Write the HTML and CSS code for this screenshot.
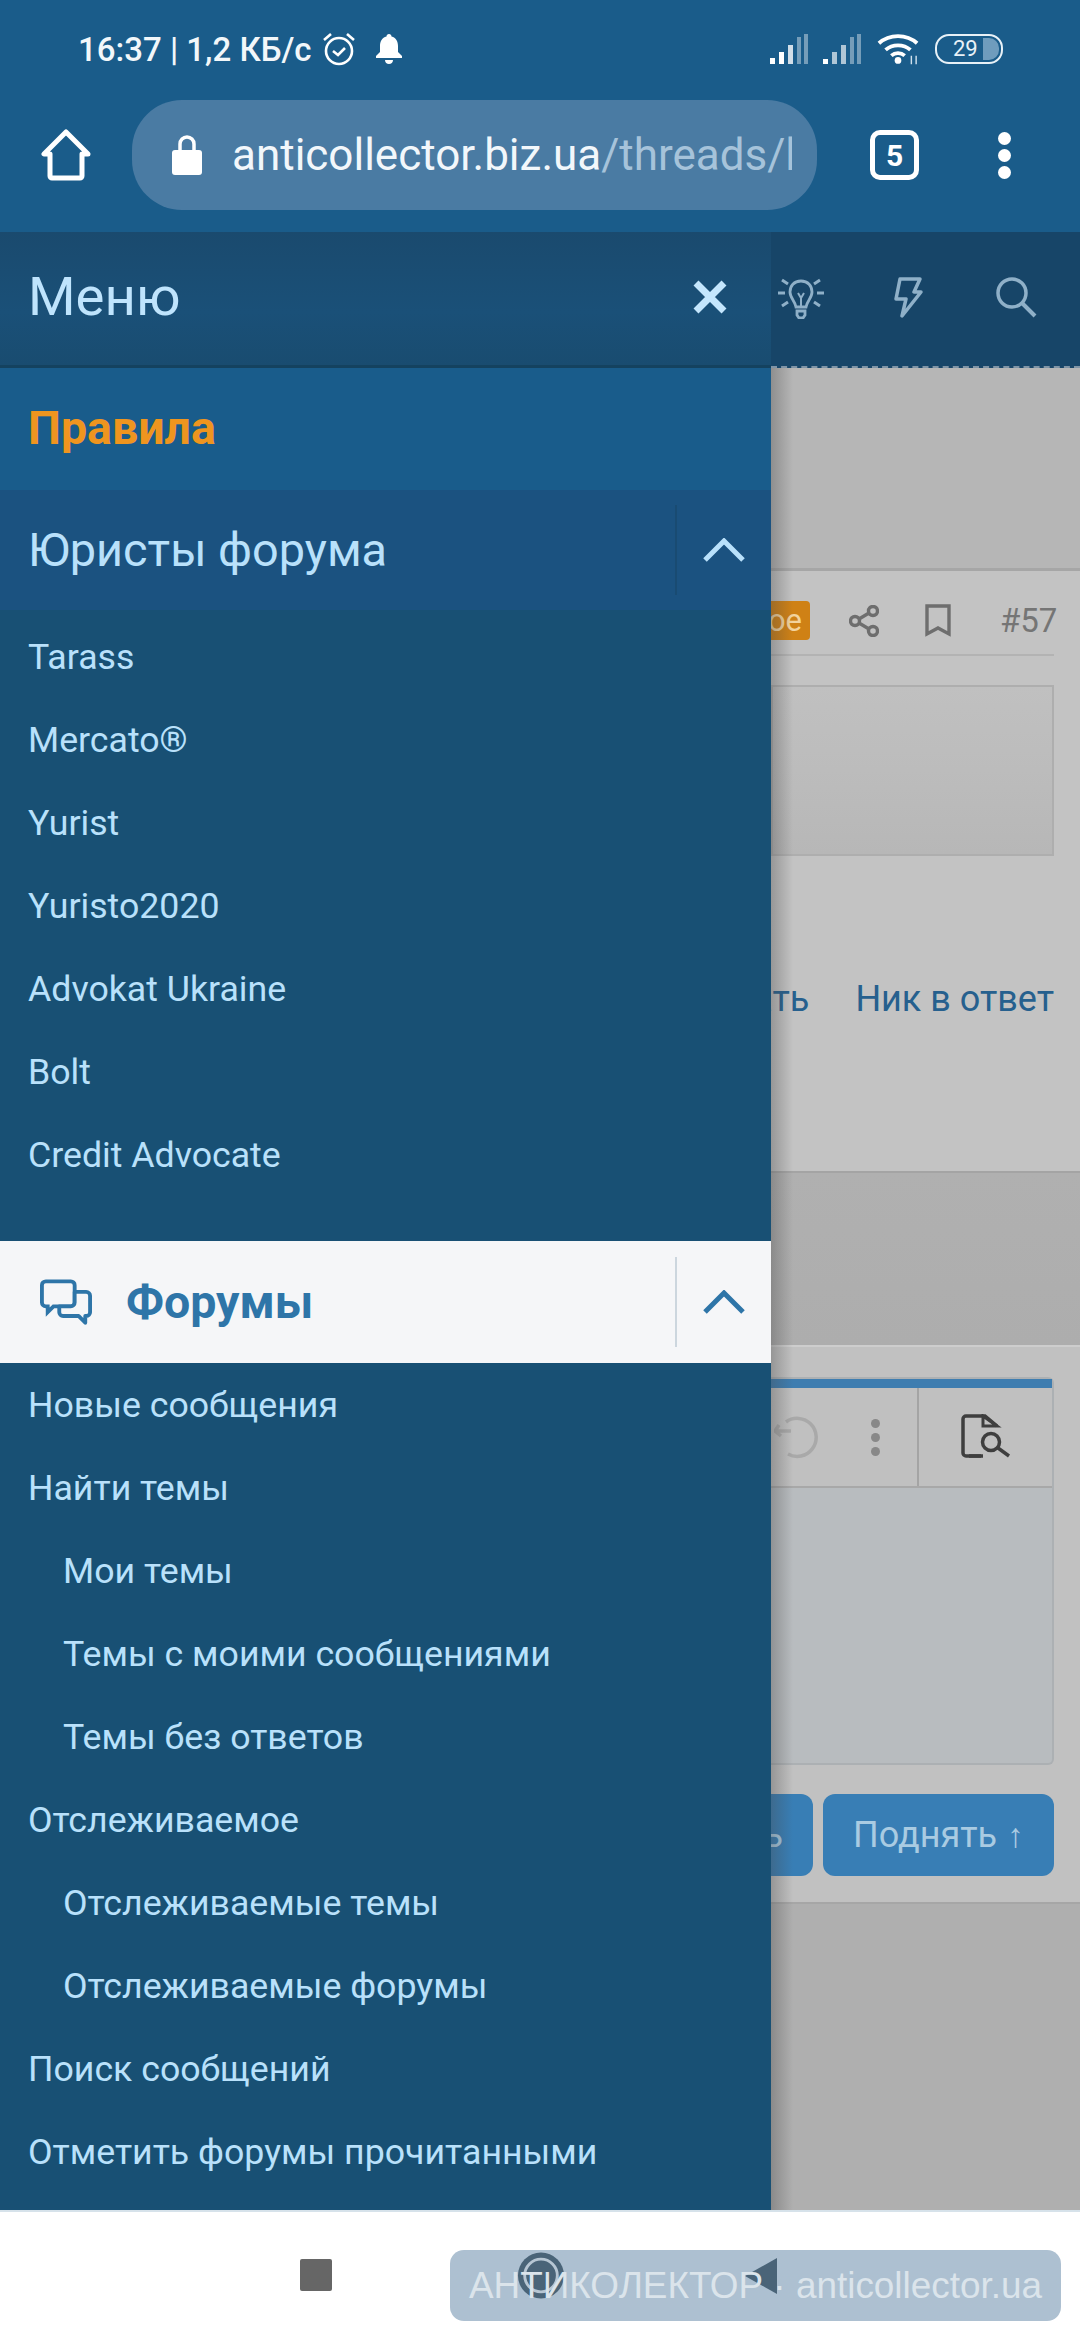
FILE: index.html
```html
<!DOCTYPE html>
<html lang="ru">
<head>
<meta charset="utf-8">
<title>Меню</title>
<link rel="stylesheet" href="styles.css">
</head>
<body>
<div class="phone">
  <div class="chrome">
    <div class="status">
      <div class="status-left">
        <span class="clock">16:37 | 1,2 КБ/с</span>
        <svg class="ic-alarm" viewBox="0 0 36 36"><circle cx="18" cy="20" r="13" fill="none" stroke="#fff" stroke-width="2.6"/><path d="M12 20l5 4 7-7M3 9l7-6M33 9l-7-6" fill="none" stroke="#fff" stroke-width="2.6"/></svg>
        <svg class="ic-bell" viewBox="0 0 30 32"><path d="M15 1c1.500 0 2.500 1 2.500 2.500 4.500 1.200 6.500 5 6.500 9.500v6l4 4v2H2v-2l4-4v-6c0-4.500 2-8.300 6.500-9.500C12.500 2 13.500 1 15 1zM11 27h8c0 2.500-1.700 4-4 4s-4-1.500-4-4z" fill="#fff"/></svg>
      </div>
      <div class="status-right">
        <svg class="ic-signal" viewBox="0 0 40 30"><path d="M1 30v-6h5v6zM10 30V18h5v12z" fill="#fff"/><path d="M19 30V11h5v19z" fill="#fff" opacity=".8"/><path d="M28 30V3h4v27zM35 30V0h4v30z" fill="#fff" opacity=".4"/></svg>
        <svg class="ic-signal" viewBox="0 0 40 30"><path d="M1 30v-5h5v5z" fill="#fff"/><path d="M10 30V18h5v12zM19 30V11h5v19z" fill="#fff" opacity=".65"/><path d="M28 30V3h4v27zM35 30V0h4v30z" fill="#fff" opacity=".4"/></svg>
        <svg class="ic-wifi" viewBox="0 0 44 34"><path d="M2 11c11-10 29-10 40 0M9 18c7-6.500 19-6.500 26 0M15 24c4-3.500 10-3.500 14 0" fill="none" stroke="#fff" stroke-width="4"/><circle cx="22" cy="29" r="3.500" fill="#fff"/><path d="M36 24v9M41 24v9" stroke="#cfe0ec" stroke-width="1.500"/></svg>
        <div class="battery"><span class="battery-num">29</span><span class="battery-fill"></span></div>
      </div>
    </div>
    <div class="urlbar">
      <svg class="ic-home" viewBox="0 0 52 52"><path d="M26 3L4 25h6v22a2 2 0 0 0 2 2h28a2 2 0 0 0 2-2V25h6z" fill="none" stroke="#fff" stroke-width="5" stroke-linejoin="round"/></svg>
      <div class="pill">
        <svg class="ic-lock" viewBox="0 0 30 40"><path d="M8 16V9a7 7 0 0 1 14 0v7" fill="none" stroke="#fff" stroke-width="3.500"/><rect x="0" y="15" width="30" height="25" rx="3" fill="#fff"/></svg>
        <div class="url"><span class="url-host">anticollector.biz.ua</span><span class="url-path">/threads/k</span></div>
      </div>
      <div class="tabs">5</div>
      <div class="more"><i></i><i></i><i></i></div>
    </div>
  </div>

  <div class="main">
    <nav class="drawer">
      <div class="drawer-head">
        <span class="drawer-title">Меню</span>
        <svg class="ic-close" viewBox="0 0 36 36"><path d="M4 4l28 28M32 4L4 32" stroke="#c4e6fd" stroke-width="7"/></svg>
      </div>
      <div class="rules"><span>Правила</span></div>
      <div class="section">
        <span class="section-title">Юристы форума</span>
        <div class="toggle"><svg class="ic-chev" viewBox="0 0 42 24"><path d="M2 22L21 3l19 19" fill="none" stroke="#b9e1fb" stroke-width="5"/></svg></div>
      </div>
      <ul class="list list-first">
        <li>Tarass</li>
        <li>Mercato®</li>
        <li>Yurist</li>
        <li>Yuristo2020</li>
        <li>Advokat Ukraine</li>
        <li>Bolt</li>
        <li>Credit Advocate</li>
      </ul>
      <div class="section section-active">
        <svg class="ic-chat" viewBox="0 0 54 48"><path d="M6 2h26a4 4 0 0 1 4 4v18a4 4 0 0 1-4 4H14l-6 6v-6H6a4 4 0 0 1-4-4V6a4 4 0 0 1 4-4z" fill="#f5f6f8" stroke="#2e75a8" stroke-width="4"/><path d="M36 13h12a4 4 0 0 1 4 4v17a4 4 0 0 1-4 4h-1v7l-7-7H24a4 4 0 0 1-4-4v-6h12a4 4 0 0 0 4-4z" fill="#f5f6f8" stroke="#2e75a8" stroke-width="4" stroke-linejoin="round"/></svg>
        <span class="section-title">Форумы</span>
        <div class="toggle"><svg class="ic-chev" viewBox="0 0 42 24"><path d="M2 22L21 3l19 19" fill="none" stroke="#2e75a8" stroke-width="5"/></svg></div>
      </div>
      <ul class="list list-last">
        <li>Новые сообщения</li>
        <li>Найти темы</li>
        <li class="sub">Мои темы</li>
        <li class="sub">Темы с моими сообщениями</li>
        <li class="sub">Темы без ответов</li>
        <li>Отслеживаемое</li>
        <li class="sub">Отслеживаемые темы</li>
        <li class="sub">Отслеживаемые форумы</li>
        <li>Поиск сообщений</li>
        <li>Отметить форумы прочитанными</li>
      </ul>
    </nav>

    <div class="page">
      <div class="page-head">
        <svg class="ic-bulb" viewBox="0 0 50 44"><path d="M25 6c-7 0-11 5-11 11 0 6 5 9 6 15h10c1-6 6-9 6-15 0-6-4-11-11-11zM21 36h8v4l-2 3h-4l-2-3z" fill="none" stroke="#8fb0c8" stroke-width="2.800"/><path d="M2 18h7M41 18h7M6 5l6 4M44 5l-6 4M6 31l6-4M44 31l-6-4" stroke="#8fb0c8" stroke-width="3"/><path d="M22 18l3 5 3-5M25 23v9" fill="none" stroke="#8fb0c8" stroke-width="2"/></svg>
        <svg class="ic-bolt" viewBox="0 0 32 42"><path d="M8 3h20l-6 13h7L10 40l4-17H4z" fill="none" stroke="#8fb0c8" stroke-width="3.500" stroke-linejoin="round"/></svg>
        <svg class="ic-search" viewBox="0 0 42 42"><circle cx="17" cy="17" r="14" fill="none" stroke="#8fb0c8" stroke-width="3.500"/><path d="M27 27l13 13" stroke="#8fb0c8" stroke-width="4"/></svg>
      </div>
      <div class="page-title"></div>
      <div class="post">
        <div class="post-meta">
          <span class="badge">Новое</span>
          <svg class="ic-share" viewBox="0 0 30 32"><g fill="none" stroke="#6e6e6e" stroke-width="3.400"><circle cx="6" cy="16" r="4.500"/><circle cx="24" cy="6" r="4.500"/><circle cx="24" cy="26" r="4.500"/><path d="M10 14l10-6M10 18l10 6"/></g></svg>
          <svg class="ic-mark" viewBox="0 0 26 33"><path d="M2 2h22v28l-11-6-11 6z" fill="none" stroke="#6e6e6e" stroke-width="3.400"/></svg>
          <span class="post-num">#57</span>
        </div>
        <div class="quote"></div>
        <div class="post-links">
          <span class="post-link">Цитировать</span>
          <span class="post-link">Ник в ответ</span>
        </div>
      </div>
      <div class="gap-band"></div>
      <div class="reply">
        <div class="editor">
          <div class="editor-top"></div>
          <div class="toolbar">
            <div class="tools">
              <svg class="ic-undo" viewBox="0 0 44 44"><path d="M12 7A19 19 0 1 1 14 39M1 16h16M5 10l-4 6 6 5" fill="none" stroke="#a9a9a9" stroke-width="3.500"/></svg>
              <div class="tool-dots"><i></i><i></i><i></i></div>
            </div>
            <div class="tool-preview">
              <svg class="ic-preview" viewBox="0 0 50 46"><path d="M20 42H5a3 3 0 0 1-3-3V5a3 3 0 0 1 3-3h19l12 10" fill="none" stroke="#3e3e3e" stroke-width="3.500"/><path d="M22 2v10h14z" fill="none" stroke="#3e3e3e" stroke-width="3"/><path d="M8 42h14" stroke="#3e3e3e" stroke-width="3.500"/><circle cx="30" cy="28" r="8.500" fill="none" stroke="#3e3e3e" stroke-width="3.500"/><path d="M37 34l11 8" stroke="#3e3e3e" stroke-width="3.500"/></svg>
            </div>
          </div>
          <div class="editor-body"></div>
        </div>
        <div class="buttons">
          <span class="btn btn-cut">Ответить</span>
          <span class="btn btn-main">Поднять <b class="btn-arrow">↑</b></span>
        </div>
      </div>
      <div class="page-foot"></div>
    </div>
  </div>

  <div class="navbar">
    <span class="nav-square"></span>
    <div class="watermark">
      <svg class="nav-circle" viewBox="0 0 50 50"><circle cx="25" cy="25" r="24" fill="#4a6478"/><circle cx="25" cy="25" r="17" fill="none" stroke="#b7c6d3" stroke-width="3"/></svg>
      <svg class="nav-back" viewBox="0 0 32 36"><path d="M32 0v36L0 18z" fill="#4a6478"/></svg>
      <span class="watermark-text">АНТИКОЛЕКТОР · anticollector.ua</span>
    </div>
  </div>
</div>
</body>
</html>
```

FILE: styles.css
```css
* { box-sizing: border-box; }
html, body { margin: 0; padding: 0; }
body { width: 1080px; height: 2340px; overflow: hidden; font-family: Roboto, "Liberation Sans", sans-serif; }
.phone { width: 1080px; height: 2340px; display: flex; flex-direction: column; background: #fff; }

/* browser chrome */
.chrome { height: 232px; background: #1a5c8a; display: flex; flex-direction: column; flex: none; }
.status { height: 100px; display: flex; justify-content: space-between; align-items: flex-start; padding: 29px 77px 0 78px; }
.status-left, .status-right { display: flex; align-items: center; height: 40px; }
.clock { color: #f2f7fa; font-size: 33px; font-weight: 500; white-space: nowrap; }
.ic-alarm { width: 36px; height: 36px; margin-left: 9px; }
.ic-bell { width: 30px; height: 32px; margin-left: 17px; }
.ic-signal { width: 40px; height: 30px; margin-right: 13px; }
.ic-wifi { width: 42px; height: 34px; margin-left: 2px; }
.battery { width: 68px; height: 30px; margin-left: 16px; border: 2.500px solid #e8f1f7; border-radius: 14px; display: flex; align-items: center; position: relative; padding-left: 16px; }
.battery-num { color: #e8f1f7; font-size: 22px; line-height: 1; }
.battery-fill { position: absolute; right: 2px; top: 2px; bottom: 2px; width: 16px; border-radius: 0 10px 10px 0; background: #6f9cbd; }

.urlbar { height: 110px; display: flex; align-items: center; }
.ic-home { width: 52px; height: 52px; margin-left: 40px; flex: none; }
.pill { width: 685px; height: 110px; margin-left: 40px; border-radius: 50px; background: #4a7ba3; display: flex; align-items: center; padding: 0 25px 0 40px; flex: none; }
.ic-lock { width: 30px; height: 40px; flex: none; }
.url { margin-left: 30px; font-size: 44px; white-space: nowrap; overflow: hidden; width: 560px; }
.url-host { color: #f2f7fb; }
.url-path { color: #a6c3da; }
.tabs { width: 49px; height: 50px; margin-left: 53px; border: 5px solid #fff; border-radius: 10px; color: #fff; font-size: 30px; font-weight: 700; display: flex; align-items: center; justify-content: center; flex: none; }
.more { display: flex; flex-direction: column; gap: 4px; margin-left: 79px; }
.more i { display: block; width: 13px; height: 13px; border-radius: 50%; background: #fff; }

/* main split */
.main { height: 1978px; display: flex; flex: none; }

.drawer { width: 771px; flex: none; background: #185074; display: flex; flex-direction: column; color: #b9e1fb; }
.drawer-head { height: 136px; display: flex; align-items: center; justify-content: space-between; padding: 0 43px 5px 28px; background: linear-gradient(#1a4a6e, #1a5078 60%, #194c70); border-bottom: 3px solid #14425f; }
.drawer-title { font-size: 54.500px; color: #bfe4fd; }
.ic-close { width: 36px; height: 36px; margin-top: 2px; }
.rules { height: 122px; background: #195c8b; display: flex; align-items: center; padding: 0 0 2px 28px; font-size: 46.500px; font-weight: 700; color: #ee951f; }
.section { height: 120px; display: flex; align-items: center; padding-left: 28px; background: #1b5280; font-size: 46.800px; position: relative; color: #b9e1fb; }
.section-title { flex: 1; }
.toggle { width: 96px; height: 90px; border-left: 2px solid #194b72; display: flex; align-items: center; justify-content: center; flex: none; }
.ic-chev { width: 42px; height: 24px; }
.list { list-style: none; margin: 0; padding: 5px 0 45px; }
.list li { height: 83px; display: flex; align-items: center; padding-left: 28px; font-size: 35.700px; color: #b9e1fb; }
.list li.sub { padding-left: 63px; }
.list-last { padding: 0; }
.section-active { height: 122px; background: #f5f6f8; color: #2e75a8; font-weight: 700; font-size: 46.500px; padding-left: 40px; }
.section-active .section-title { margin-left: 34px; }
.section-active .toggle { border-left-color: #ccd6de; }
.ic-chat { width: 52px; height: 47px; flex: none; }

/* dimmed page */
.page { flex: 1; min-width: 0; display: flex; flex-direction: column; overflow: hidden; position: relative; background: #c2c2c2; }
.page::after { content: ""; position: absolute; left: 0; top: 136px; bottom: 0; width: 22px; background: linear-gradient(to right, rgba(70, 70, 70, .35), rgba(70, 70, 70, 0)); }
.page-head { height: 136px; flex: none; background: #174568; border-bottom: 2px dashed #7f94a6; display: flex; align-items: center; padding: 0 0 4px 5px; }
.ic-bulb { width: 50px; height: 44px; }
.ic-bolt { width: 32px; height: 42px; margin-left: 66px; }
.ic-search { width: 42px; height: 42px; margin-left: 71px; }
.page-title { height: 203px; flex: none; background: #b6b6b6; border-bottom: 3px solid #a6a6a6; }
.post { height: 600px; flex: none; background: #c3c3c3; padding-right: 26px; display: flex; flex-direction: column; align-items: flex-end; }
.post-meta { height: 85px; width: 100%; flex: none; border-bottom: 2px solid #b3b3b3; display: flex; align-items: center; justify-content: flex-end; padding-top: 16px; }
.badge { background: #cf8115; color: #f3d39d; font-size: 31px; height: 39px; width: 150px; border-radius: 4px; margin-right: 39px; display: flex; align-items: center; justify-content: flex-end; padding-right: 8px; flex: none; }
.ic-share { width: 30px; height: 32px; margin-right: 46px; flex: none; }
.ic-mark { width: 26px; height: 33px; margin-right: 49px; flex: none; }
.post-num { font-size: 33px; color: #757575; width: 54px; flex: none; white-space: nowrap; }
.quote { width: 100%; height: 171px; margin-top: 29px; background: linear-gradient(#c0c0c0, #bcbcbc 50%, #b7b7b7); border: 2px solid #aeaeae; flex: none; }
.post-links { display: flex; justify-content: flex-end; gap: 46px; margin-top: 122px; white-space: nowrap; flex: none; }
.post-link { font-size: 36px; color: #26608e; }
.gap-band { height: 174px; flex: none; background: linear-gradient(#b0b0b0, #adadad); border-top: 2px solid #a4a4a4; }
.reply { height: 559px; flex: none; background: #c1c1c1; border-top: 2px solid #cdcdcd; border-bottom: 2px solid #a6a6a6; padding: 30px 26px 0 0; display: flex; flex-direction: column; }
.editor { height: 388px; flex: none; border: 2px solid #acb0b3; border-left: 0; border-radius: 0 6px 6px 0; display: flex; flex-direction: column; background: #b8bcbf; }
.editor-top { height: 9px; background: #3e7db0; flex: none; }
.toolbar { height: 100px; display: flex; flex: none; background: #c0c0c0; border-bottom: 2px solid #a8a8a8; }
.tools { width: 146px; flex: none; display: flex; align-items: center; justify-content: space-between; padding: 0 37px 0 3px; }
.ic-undo { width: 44px; height: 44px; }
.tool-dots { display: flex; flex-direction: column; gap: 5px; }
.tool-dots i { display: block; width: 9px; height: 9px; border-radius: 50%; background: #888; }
.tool-preview { flex: 1; border-left: 2px solid #a4a4a4; display: flex; align-items: center; justify-content: center; }
.ic-preview { width: 50px; height: 46px; }
.editor-body { flex: 1; }
.buttons { display: flex; gap: 10px; margin-top: 29px; height: 82px; flex: none; }
.btn { background: #387eb5; color: #a9cbe2; font-size: 36px; border-radius: 12px; display: flex; align-items: center; gap: 10px; white-space: nowrap; }
.btn-cut { width: 42px; justify-content: flex-end; overflow: hidden; border-radius: 0 12px 12px 0; flex: none; padding-right: 30px; }
.btn-main { flex: 1; justify-content: center; }
.btn-arrow { font-size: 34px; font-weight: 900; }
.page-foot { flex: 1; background: #afafaf; }

/* nav bar */
.navbar { height: 130px; flex: none; background: #fff; border-top: 2px solid #d6e2ea; display: flex; align-items: flex-start; padding: 38px 0 0 300px; position: relative; }
.nav-square { width: 32px; height: 32px; margin-top: 9px; background: #666; border-radius: 2px; flex: none; }
.watermark { width: 611px; height: 71px; margin-left: 118px; background: #adc0d1; border-radius: 14px; position: relative; display: flex; align-items: center; justify-content: center; flex: none; }
.nav-circle { position: absolute; left: 67px; top: 1px; width: 48px; height: 49px; }
.nav-back { position: absolute; left: 295px; top: 8px; width: 32px; height: 36px; }
.watermark-text { position: relative; font-family: "Liberation Sans", sans-serif; font-size: 36.900px; color: #dbe4eb; white-space: nowrap; margin-top: 1px; }
```
